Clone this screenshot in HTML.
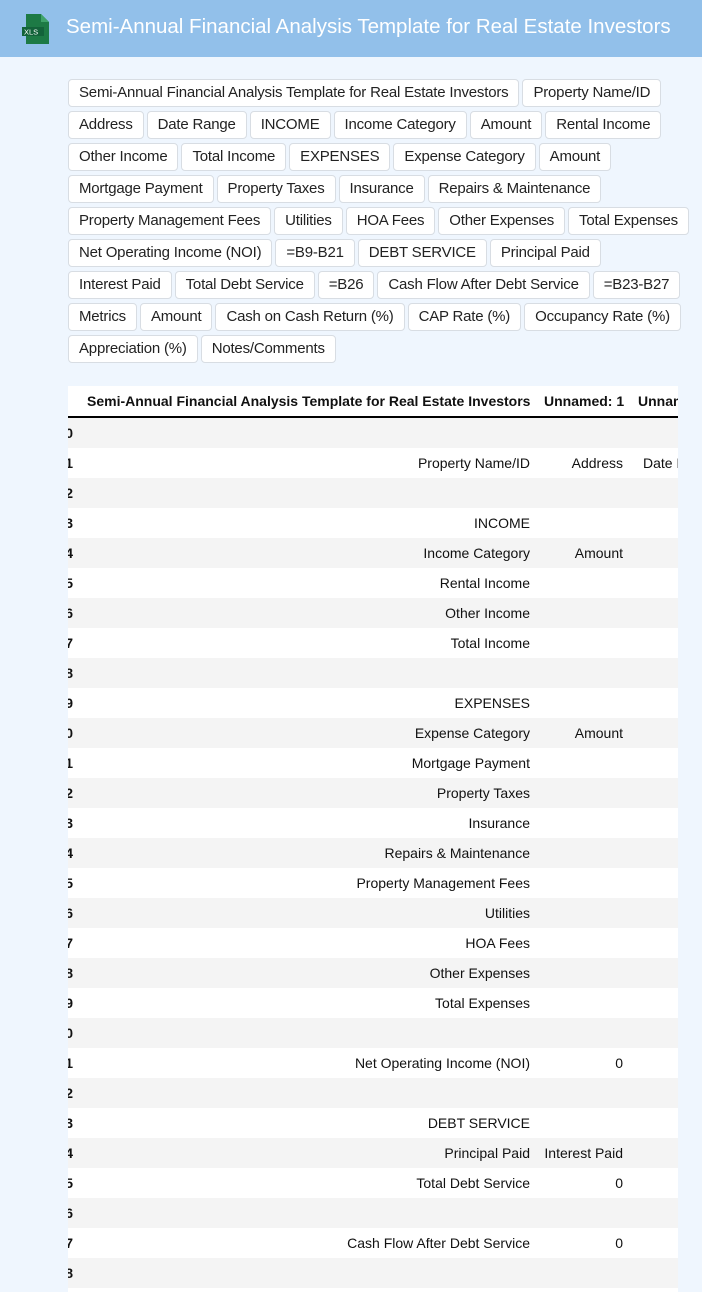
<!DOCTYPE html>
<html><head><meta charset="utf-8"><style>
*{margin:0;padding:0;box-sizing:border-box}
body{width:702px;height:1292px;overflow:hidden;background:#eff6fe;font-family:"Liberation Sans",Arial,sans-serif;position:relative}
.hdr{position:absolute;left:0;top:0;width:702px;height:57px;background:#92c0ea}
.hdr .t{position:absolute;left:66px;top:15px;color:#fff;font-size:20.5px;white-space:nowrap}
.chips{position:absolute;left:68px;top:79px}
.row{display:flex;gap:3px;margin-bottom:4px;white-space:nowrap}
.c{height:28px;line-height:26px;padding:0 10px;background:#fff;border:1px solid #d8dde3;border-radius:4px;font-size:15px;letter-spacing:-0.2px;color:#222}
.tbl{position:absolute;left:68px;top:386px;width:610px;height:906px;overflow:hidden;background:#fff}
.r{position:relative;width:610px;height:30px;font-size:14px;line-height:30px;color:#111}
.g{background:#f4f4f4}
.r span{position:absolute;top:0;white-space:nowrap}
.i{right:605px;font-weight:bold}
.a{right:148px}
.b{right:55px;width:100px;text-align:right}
.d{left:575px}
.h{font-weight:bold;border-bottom:2px solid #000;height:32px;background:#fff}
</style></head><body>
<div class="hdr">
<svg style="position:absolute;left:22px;top:13px" width="30" height="32" viewBox="0 0 30 32"><path d="M4 1h15l8 8v22H4z" fill="#1d7a45"/><path d="M19 1v8h8z" fill="#3fa36a"/><rect x="0" y="14" width="22" height="9" fill="#13633a"/><text x="2" y="21.5" font-size="7.5" fill="#fff" font-family="Liberation Sans">XLS</text></svg>
<div class="t">Semi-Annual Financial Analysis Template for Real Estate Investors</div>
</div>
<div class="chips">
<div class="row"><div class="c">Semi-Annual Financial Analysis Template for Real Estate Investors</div><div class="c">Property Name/ID</div></div>
<div class="row"><div class="c">Address</div><div class="c">Date Range</div><div class="c">INCOME</div><div class="c">Income Category</div><div class="c">Amount</div><div class="c">Rental Income</div></div>
<div class="row"><div class="c">Other Income</div><div class="c">Total Income</div><div class="c">EXPENSES</div><div class="c">Expense Category</div><div class="c">Amount</div></div>
<div class="row"><div class="c">Mortgage Payment</div><div class="c">Property Taxes</div><div class="c">Insurance</div><div class="c">Repairs &amp; Maintenance</div></div>
<div class="row"><div class="c">Property Management Fees</div><div class="c">Utilities</div><div class="c">HOA Fees</div><div class="c">Other Expenses</div><div class="c">Total Expenses</div></div>
<div class="row"><div class="c">Net Operating Income (NOI)</div><div class="c">=B9-B21</div><div class="c">DEBT SERVICE</div><div class="c">Principal Paid</div></div>
<div class="row"><div class="c">Interest Paid</div><div class="c">Total Debt Service</div><div class="c">=B26</div><div class="c">Cash Flow After Debt Service</div><div class="c">=B23-B27</div></div>
<div class="row"><div class="c">Metrics</div><div class="c">Amount</div><div class="c">Cash on Cash Return (%)</div><div class="c">CAP Rate (%)</div><div class="c">Occupancy Rate (%)</div></div>
<div class="row"><div class="c">Appreciation (%)</div><div class="c">Notes/Comments</div></div>
</div>
<div class="tbl">
<div class="r h"><span style="left:19px">Semi-Annual Financial Analysis Template for Real Estate Investors</span><span style="left:476px">Unnamed: 1</span><span style="left:570px">Unnamed: 2</span></div>
<div class="r g"><span class="i">0</span></div>
<div class="r"><span class="i">1</span><span class="a">Property Name/ID</span><span class="b">Address</span><span class="d">Date Range</span></div>
<div class="r g"><span class="i">2</span></div>
<div class="r"><span class="i">3</span><span class="a">INCOME</span></div>
<div class="r g"><span class="i">4</span><span class="a">Income Category</span><span class="b">Amount</span></div>
<div class="r"><span class="i">5</span><span class="a">Rental Income</span></div>
<div class="r g"><span class="i">6</span><span class="a">Other Income</span></div>
<div class="r"><span class="i">7</span><span class="a">Total Income</span></div>
<div class="r g"><span class="i">8</span></div>
<div class="r"><span class="i">9</span><span class="a">EXPENSES</span></div>
<div class="r g"><span class="i">10</span><span class="a">Expense Category</span><span class="b">Amount</span></div>
<div class="r"><span class="i">11</span><span class="a">Mortgage Payment</span></div>
<div class="r g"><span class="i">12</span><span class="a">Property Taxes</span></div>
<div class="r"><span class="i">13</span><span class="a">Insurance</span></div>
<div class="r g"><span class="i">14</span><span class="a">Repairs &amp; Maintenance</span></div>
<div class="r"><span class="i">15</span><span class="a">Property Management Fees</span></div>
<div class="r g"><span class="i">16</span><span class="a">Utilities</span></div>
<div class="r"><span class="i">17</span><span class="a">HOA Fees</span></div>
<div class="r g"><span class="i">18</span><span class="a">Other Expenses</span></div>
<div class="r"><span class="i">19</span><span class="a">Total Expenses</span></div>
<div class="r g"><span class="i">20</span></div>
<div class="r"><span class="i">21</span><span class="a">Net Operating Income (NOI)</span><span class="b">0</span></div>
<div class="r g"><span class="i">22</span></div>
<div class="r"><span class="i">23</span><span class="a">DEBT SERVICE</span></div>
<div class="r g"><span class="i">24</span><span class="a">Principal Paid</span><span class="b">Interest Paid</span></div>
<div class="r"><span class="i">25</span><span class="a">Total Debt Service</span><span class="b">0</span></div>
<div class="r g"><span class="i">26</span></div>
<div class="r"><span class="i">27</span><span class="a">Cash Flow After Debt Service</span><span class="b">0</span></div>
<div class="r g"><span class="i">28</span></div>
<div class="r"><span class="i">29</span></div>
</div>
</body></html>
